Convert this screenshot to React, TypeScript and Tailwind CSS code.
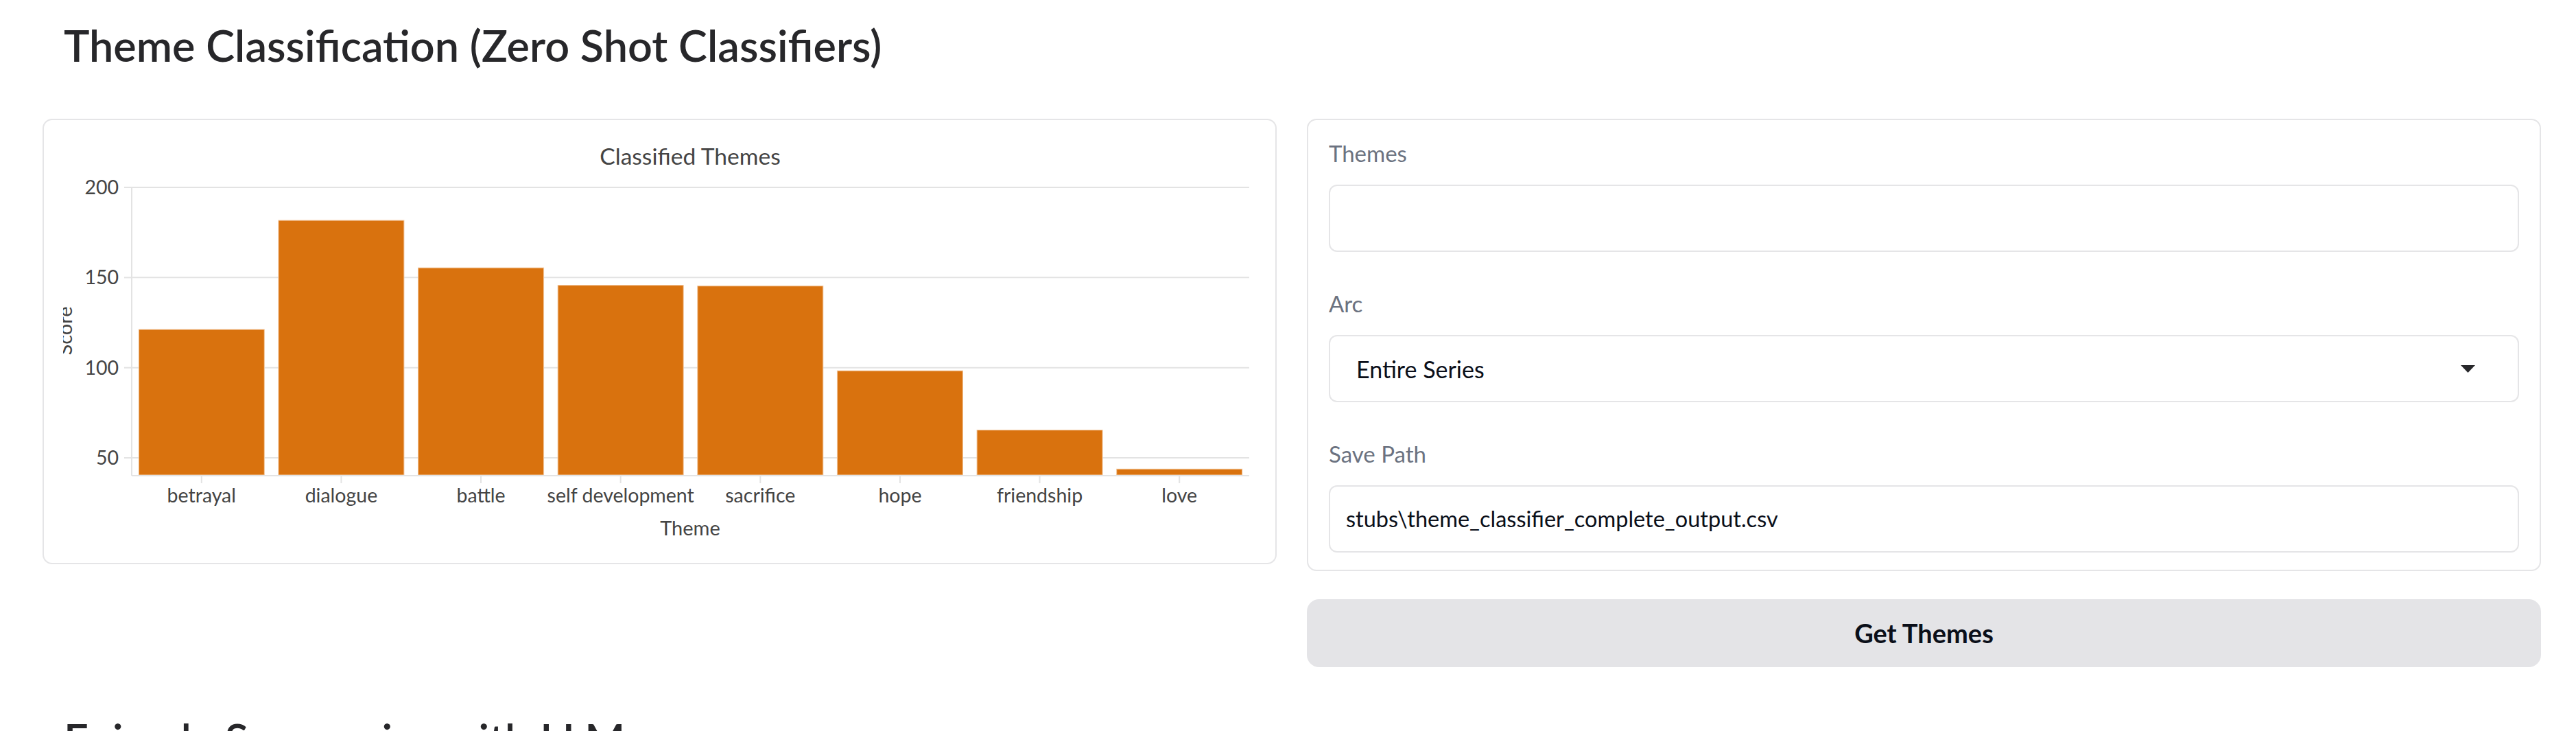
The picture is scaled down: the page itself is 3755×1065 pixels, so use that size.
import React from 'react'

interface ThemeScore {
  label: string
  value: number
}

const themeScores: ThemeScore[] = [
  { label: 'betrayal', value: 121.2 },
  { label: 'dialogue', value: 181.7 },
  { label: 'battle', value: 155.4 },
  { label: 'self development', value: 145.7 },
  { label: 'sacrifice', value: 145.3 },
  { label: 'hope', value: 98.3 },
  { label: 'friendship', value: 65.4 },
  { label: 'love', value: 43.8 },
]

// plot area inside the chart svg
const PLOT_LEFT = 128
const PLOT_RIGHT = 1757
const PLOT_TOP = 98
const PLOT_BOTTOM = 517
const PX_PER_UNIT = 2.627
const BAND = (PLOT_RIGHT - PLOT_LEFT) / themeScores.length
const BAR_WIDTH = 183

const yFor = (v: number) => PLOT_TOP + (200 - v) * PX_PER_UNIT

const ThemeChart = () => {
  const ticks = [200, 150, 100, 50]

  return (
    <svg className="block" height={645} width={1795}>
      <defs>
        <clipPath id="score-clip">
          <rect height={645} width={200} x={28} y={0} />
        </clipPath>
      </defs>

      <text fill="#444" fontSize={33.6} textAnchor="middle" x={942} y={65}>
        Classified Themes
      </text>

      {ticks.map((t) => (
        <g key={t}>
          <line stroke="#e3e3e3" strokeWidth={2} x1={PLOT_LEFT} x2={PLOT_RIGHT} y1={yFor(t)} y2={yFor(t)} />
          <line stroke="#e3e3e3" strokeWidth={2} x1={117} x2={PLOT_LEFT} y1={yFor(t)} y2={yFor(t)} />
          <text dy="0.35em" fill="#444" fontSize={28.5} textAnchor="end" x={109} y={yFor(t)}>
            {t}
          </text>
        </g>
      ))}

      {themeScores.map((s, i) => {
        const x = PLOT_LEFT + BAND * i + (BAND - BAR_WIDTH) / 2
        const top = yFor(s.value)
        return (
          <rect
            fill="#d9720e"
            height={PLOT_BOTTOM - top}
            key={s.label}
            stroke="#f3c9a0"
            strokeWidth={1}
            width={BAR_WIDTH}
            x={x}
            y={top}
          />
        )
      })}

      <line stroke="#e3e3e3" strokeWidth={2} x1={PLOT_LEFT} x2={PLOT_LEFT} y1={PLOT_TOP} y2={PLOT_BOTTOM + 1} />
      <line stroke="#e3e3e3" strokeWidth={2} x1={PLOT_LEFT} x2={PLOT_RIGHT} y1={PLOT_BOTTOM + 1} y2={PLOT_BOTTOM + 1} />

      {themeScores.map((s, i) => {
        const cx = PLOT_LEFT + BAND * (i + 0.5)
        return (
          <g key={s.label}>
            <line stroke="#e3e3e3" strokeWidth={2} x1={cx} x2={cx} y1={PLOT_BOTTOM + 2} y2={PLOT_BOTTOM + 12} />
            <text fill="#444" fontSize={28.5} textAnchor="middle" x={cx} y={557}>
              {s.label}
            </text>
          </g>
        )
      })}

      <text fill="#444" fontSize={29} textAnchor="middle" x={942} y={605}>
        Theme
      </text>

      <g clipPath="url(#score-clip)">
        <text fill="#444" fontSize={29} textAnchor="middle" transform="translate(41 307) rotate(-90)">
          Score
        </text>
      </g>
    </svg>
  )
}

const FieldLabel = ({ children }: { children: React.ReactNode }) => (
  <div className="h-[40px] text-[33px] leading-[40px] text-[#6b7280]">{children}</div>
)

export default function App() {
  return (
    <div className="min-h-screen bg-white pl-[62px] pr-[51px] font-[family-name:Lato,sans-serif] text-[#27272a]">
      <h2 className="pl-[31px] pt-[30px] text-[63px] leading-[72px] font-semibold">
        Theme Classification (Zero Shot Classifiers)
      </h2>

      <div className="mt-[71px] grid grid-cols-2 items-start gap-[44px]">
        <div className="h-[649px] overflow-hidden rounded-[14px] border-2 border-[#e5e5e7] bg-white">
          <ThemeChart />
        </div>

        <div className="flex flex-col">
          <div className="flex h-[659px] flex-col gap-[55px] rounded-[14px] border-2 border-[#e5e5e7] bg-white px-[30px] pt-[28px] pb-[25px]">
            <div>
              <FieldLabel>Themes</FieldLabel>
              <div className="mt-[26px] h-[98px] rounded-[12px] border-2 border-[#e5e5e7] bg-white" />
            </div>
            <div>
              <FieldLabel>Arc</FieldLabel>
              <div className="mt-[26px] flex h-[98px] items-center justify-between rounded-[12px] border-2 border-[#e5e5e7] bg-white pl-[38px] pr-[62px]">
                <span className="text-[34px] text-[#0b0f19]">Entire Series</span>
                <svg height={11} viewBox="0 0 21 11" width={21}>
                  <path d="M0 0 H21 L10.5 11 Z" fill="#27272a" />
                </svg>
              </div>
            </div>
            <div>
              <FieldLabel>Save Path</FieldLabel>
              <div className="mt-[26px] flex h-[98px] items-center rounded-[12px] border-2 border-[#e5e5e7] bg-white pl-[23px]">
                <span className="text-[32.5px] text-[#0b0f19]">stubs\theme_classifier_complete_output.csv</span>
              </div>
            </div>
          </div>

          <button className="mt-[41px] h-[99px] rounded-[18px] bg-[#e4e4e7] text-[38px] font-bold text-[#0b0f19]" type="button">
            Get Themes
          </button>
        </div>
      </div>

      <h2 className="mt-[69px] pl-[31px] text-[63px] leading-[72px] font-semibold">Episode Summaries with LLMs</h2>
    </div>
  )
}
